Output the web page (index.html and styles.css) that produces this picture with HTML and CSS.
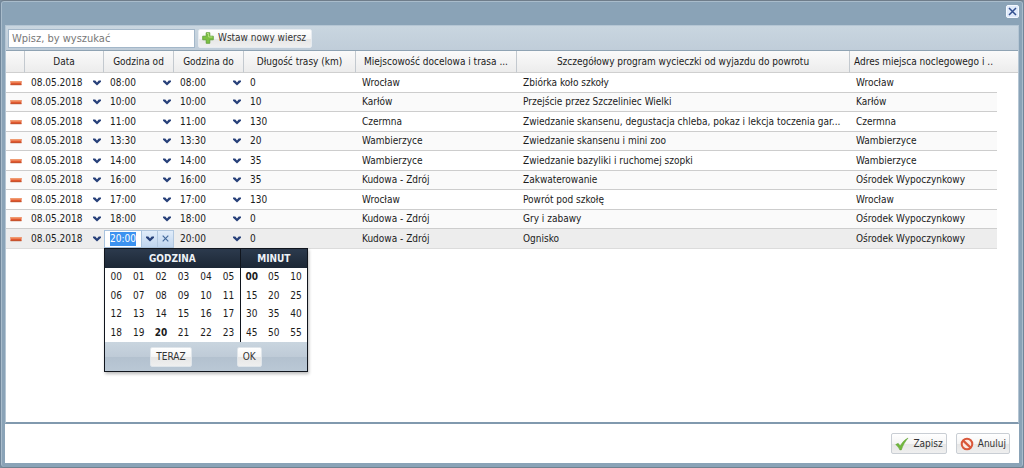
FILE: index.html
```
<!DOCTYPE html>
<html lang="pl">
<head>
<meta charset="utf-8">
<title>Harmonogram wycieczki</title>
<link rel="stylesheet" href="styles.css">
</head>
<body>
<svg class="defs" aria-hidden="true">
  <symbol id="chevron" viewBox="0 0 10 8"><path d="M1 1.500h2.300L5 3.600 6.700 1.500H9v1.200L5 6.600 1 2.700z" fill="#274079"/></symbol>
  <symbol id="minus" viewBox="0 0 12 6"><rect x=".5" y="1" width="11" height="4" fill="#e2582f"/><rect x=".5" y="1" width="11" height="1.600" fill="#f09a70"/><rect x=".5" y="4.400" width="11" height=".8" fill="#b5502f"/></symbol>
</svg>
<div class="window">
  <header class="titlebar">
    <button class="close" type="button" aria-label="Zamknij"><svg width="9" height="9" viewBox="0 0 9 9"><path d="M1 1l7 7M8 1L1 8" stroke="#33508f" stroke-width="1.500"/></svg></button>
  </header>
  <main class="panel">
    <div class="toolbar">
      <input class="search" type="text" placeholder="Wpisz, by wyszukać" aria-label="Wyszukaj">
      <button class="btn add" type="button"><svg width="12" height="12" viewBox="0 0 12 12"><path d="M4.200.7h3.600v3.500h3.500v3.600H7.800v3.500H4.200V7.800H.7V4.200h3.500z" fill="#7cc142" stroke="#5a9c32" stroke-width=".8"/><path d="M5 1.500h1.600V5h3.900" fill="none" stroke="#b5e27f"/></svg>Wstaw nowy wiersz</button>
    </div>
    <div class="grid">
      <table class="rows">
        <colgroup><col class="c-del"><col class="c-date"><col class="c-time"><col class="c-time"><col class="c-len"><col class="c-place"><col class="c-plan"><col class="c-addr"><col class="c-gutter"></colgroup>
        <thead><tr><th></th><th>Data</th><th>Godzina od</th><th>Godzina do</th><th>Długość trasy (km)</th><th>Miejscowość docelowa i trasa ...</th><th>Szczegółowy program wycieczki od wyjazdu do powrotu</th><th>Adres miejsca noclegowego i ..</th><th></th></tr></thead>
        <tbody id="rows"></tbody>
      </table>
    </div>
  </main>
  <footer class="actions">
    <button class="btn save" type="button"><svg width="14" height="14" viewBox="0 0 15 14"><path d="M.8 7.600l2.600-1.300 2.200 2.900C7.300 5.800 10 2.500 14 .6 10.800 4.200 8.500 8.400 6.800 13.300H5.200C4.200 11.200 2.800 9.200.8 7.600z" fill="#72b83e" stroke="#5a9e30" stroke-width=".5"/></svg>Zapisz</button>
    <button class="btn cancel" type="button"><svg width="14" height="14" viewBox="0 0 14 14"><circle cx="7" cy="7" r="5.300" fill="#fbe9e3" stroke="#d9573a" stroke-width="2"/><path d="M3.200 3.600l7.400 7" stroke="#d9573a" stroke-width="2.200"/></svg>Anuluj</button>
  </footer>
</div>
<script src="app.js"></script>
</body>
</html>
```
FILE: styles.css
```
* { box-sizing: border-box; }
body {
  margin: 0;
  font-family: "DejaVu Sans Condensed", "DejaVu Sans", sans-serif;
  font-size: 10px;
  line-height: 14px;
  color: #1b1b1b;
  background: #7b8e9e;
}
button, input { font: inherit; color: inherit; margin: 0; padding: 0; }
svg { display: block; flex: none; }
.defs { position: absolute; width: 0; height: 0; }

.window {
  display: flex;
  flex-direction: column;
  min-height: 100vh;
  padding: 0 4px 4px;
  border: 1px solid #70869a;
  border-top-color: #6f7d8a;
  border-bottom-color: #71818f;
  border-radius: 4px;
  background: #8aa3b7;
  box-shadow: inset 0 1px #a9bccb, inset 1px 0 #a9bccb, inset -1px 0 #a9bccb;
}
.titlebar {
  display: flex;
  justify-content: flex-end;
  align-items: flex-start;
  height: 24px;
  padding-top: 4px;
}
.close {
  display: grid;
  place-items: center;
  width: 13px;
  height: 13px;
  border: 1px solid #f4f8ff;
  border-radius: 2px;
  background: #dfeafa;
}
.panel {
  flex: 1;
  display: flex;
  flex-direction: column;
  border: 1px solid #b5c6d4;
  border-bottom: 2px solid #8199ae;
  background: #fff;
}
.toolbar {
  display: flex;
  align-items: center;
  gap: 3px;
  height: 25px;
  padding: 0 2px;
  border-bottom: 1px solid #8fa3b3;
  background: linear-gradient(#c9d6e0, #c0cdd9);
}
.search {
  width: 187px;
  height: 19px;
  padding: 0 3px;
  border: 1px solid #a3b7c9;
  background: #fff;
  font-size: 12px;
}
.search::placeholder { color: #777; opacity: 1; font-size: 11px; }
.btn {
  display: flex;
  align-items: center;
  justify-content: center;
  gap: 4px;
  height: 21px;
  padding: 0 3px;
  border: 1px solid #c9ced4;
  border-radius: 2px;
  background: linear-gradient(#fff, #f5f5f5 50%, #e6e6e6 51%, #efefef);
  color: #333;
  white-space: nowrap;
}
.btn.add { height: 19px; padding: 0 5px 0 3px; border-color: #e6ebf0; }

.rows { width: 100%; table-layout: fixed; border-collapse: separate; border-spacing: 0; }
.c-del { width: 19px; }
.c-date { width: 79px; }
.c-time { width: 70px; }
.c-len { width: 112px; }
.c-place { width: 161px; }
.c-addr { width: 147px; }
.c-gutter { width: 21px; }
.rows th {
  height: 22px;
  padding: 0 4px;
  border-right: 1px solid #c3c9cf;
  border-bottom: 1px solid #cfcfcf;
  background: linear-gradient(#fafafa, #ececec);
  font-weight: normal;
  white-space: nowrap;
}
.rows th:nth-last-child(-n+2) { border-right: 0; }
.rows th, .rows td { overflow: hidden; }
.rows td {
  height: 19px;
  padding: 0 6px;
  border-bottom: 1px solid #cdcdcd;
  white-space: nowrap;
  text-overflow: ellipsis;
}
.rows tr:nth-child(odd) td { height: 20px; }
.rows tr:nth-child(even) td { background: #fafafa; }
.rows tr.active td { background: #ededed; border-bottom-color: #dcdcdc; }
.rows tr td.gutter { border: 0; background: #fff; }
.rows td.remove, .rows td.pick { padding: 0; }
.pick-box { display: flex; align-items: center; justify-content: space-between; padding: 0 2px 0 6px; }
.rows td.editing { position: relative; overflow: visible; }
.icon-btn { display: grid; place-items: center; width: 10px; height: 14px; border: 0; background: none; }
.remove .icon-btn { width: 19px; }
.editor { display: flex; height: 18px; }
.editor input {
  flex: 1;
  width: 0;
  padding: 0 5px;
  border: 1px solid #a9c3de;
  background: #fff;
  outline: 0;
}
.editor input::selection { background: #3c92f0; color: #fff; }
.editor button {
  display: grid;
  place-items: center;
  width: 16px;
  border: 1px solid #b1c7df;
  border-left: 0;
  background: linear-gradient(#e1edfa, #bfd5ee);
}

.picker {
  position: absolute;
  z-index: 2;
  top: 100%;
  left: 0;
  width: 204px;
  border: 1px solid #10151d;
  background: #fff;
  box-shadow: 1px 2px 3px #0004;
}
.units { display: grid; grid-template-columns: 2fr 1fr; }
.unit + .unit { border-left: 1px solid #10151d; }
.unit h2 {
  margin: 0;
  height: 19px;
  background: linear-gradient(#2c3a4d, #1c2735);
  color: #eef2f7;
  font-size: 10px;
  font-weight: bold;
  line-height: 19px;
  text-align: center;
}
.values { display: grid; grid-template-columns: repeat(6, 1fr); grid-auto-rows: 1fr; height: 74px; }
.unit + .unit .values { grid-template-columns: repeat(3, 1fr); }
.values button { border: 0; background: none; }
.values .chosen { font-weight: bold; }
.picker-actions {
  display: flex;
  justify-content: space-evenly;
  align-items: center;
  height: 29px;
  background: linear-gradient(#c9d5df, #bfcbd7 50%, #b3c1cf 51%, #bac8d5);
}
.picker-actions .btn { height: 20px; padding: 0 5px; border-color: #dfe5ea; }

.actions {
  display: flex;
  justify-content: flex-end;
  align-items: center;
  gap: 9px;
  height: 39px;
  padding: 0 9px;
  background: #fff;
}
```
FILE: app.js
```
const days = [
  ["08:00", "0", "Wrocław", "Zbiórka koło szkoły", "Wrocław"],
  ["10:00", "10", "Karłów", "Przejście przez Szczeliniec Wielki", "Karłów"],
  ["11:00", "130", "Czermna", "Zwiedzanie skansenu, degustacja chleba, pokaz i lekcja toczenia gar...", "Czermna"],
  ["13:30", "20", "Wambierzyce", "Zwiedzanie skansenu i mini zoo", "Wambierzyce"],
  ["14:00", "35", "Wambierzyce", "Zwiedzanie bazyliki i ruchomej szopki", "Wambierzyce"],
  ["16:00", "35", "Kudowa - Zdrój", "Zakwaterowanie", "Ośrodek Wypoczynkowy"],
  ["17:00", "130", "Wrocław", "Powrót pod szkołę", "Wrocław"],
  ["18:00", "0", "Kudowa - Zdrój", "Gry i zabawy", "Ośrodek Wypoczynkowy"],
  ["20:00", "0", "Kudowa - Zdrój", "Ognisko", "Ośrodek Wypoczynkowy"]
];
const chevron = '<svg width="10" height="8"><use href="#chevron"/></svg>';
const pick = v => `<td class="pick"><div class="pick-box">${v}<button class="icon-btn" type="button" aria-label="Wybierz">${chevron}</button></div></td>`;
const values = (count, step, chosen) => Array.from({ length: count }, (_, i) => {
  const v = String(i * step).padStart(2, "0");
  return `<button type="button"${v === chosen ? ' class="chosen"' : ""}>${v}</button>`;
}).join("");
const editor = v => `<td class="pick editing"><div class="editor"><input id="from" type="text" value="${v}" aria-label="Godzina od"><button type="button" aria-label="Wybierz">${chevron}</button><button type="button" aria-label="Wyczyść"><svg width="7" height="7" viewBox="0 0 7 7"><path d="M.7.7l5.600 5.600M6.300.7L.7 6.300" stroke="#456a9c" stroke-width="1.200"/></svg></button></div>
<div class="picker"><div class="units"><div class="unit"><h2>GODZINA</h2><div class="values">${values(24, 1, "20")}</div></div><div class="unit"><h2>MINUT</h2><div class="values">${values(12, 5, "00")}</div></div></div><div class="picker-actions"><button class="btn" type="button">TERAZ</button><button class="btn" type="button">OK</button></div></div></td>`;
document.getElementById("rows").innerHTML = days.map(([t, len, place, plan, addr], i) => {
  const last = i === days.length - 1;
  return `<tr${last ? ' class="active"' : ""}><td class="remove"><button class="icon-btn" type="button" aria-label="Usuń"><svg width="12" height="6"><use href="#minus"/></svg></button></td>${pick("08.05.2018")}${last ? editor(t) : pick(t)}${pick(t)}<td>${len}</td><td>${place}</td><td>${plan}</td><td>${addr}</td><td class="gutter"></td></tr>`;
}).join("");
const from = document.getElementById("from");
from.focus();
from.select();
```
